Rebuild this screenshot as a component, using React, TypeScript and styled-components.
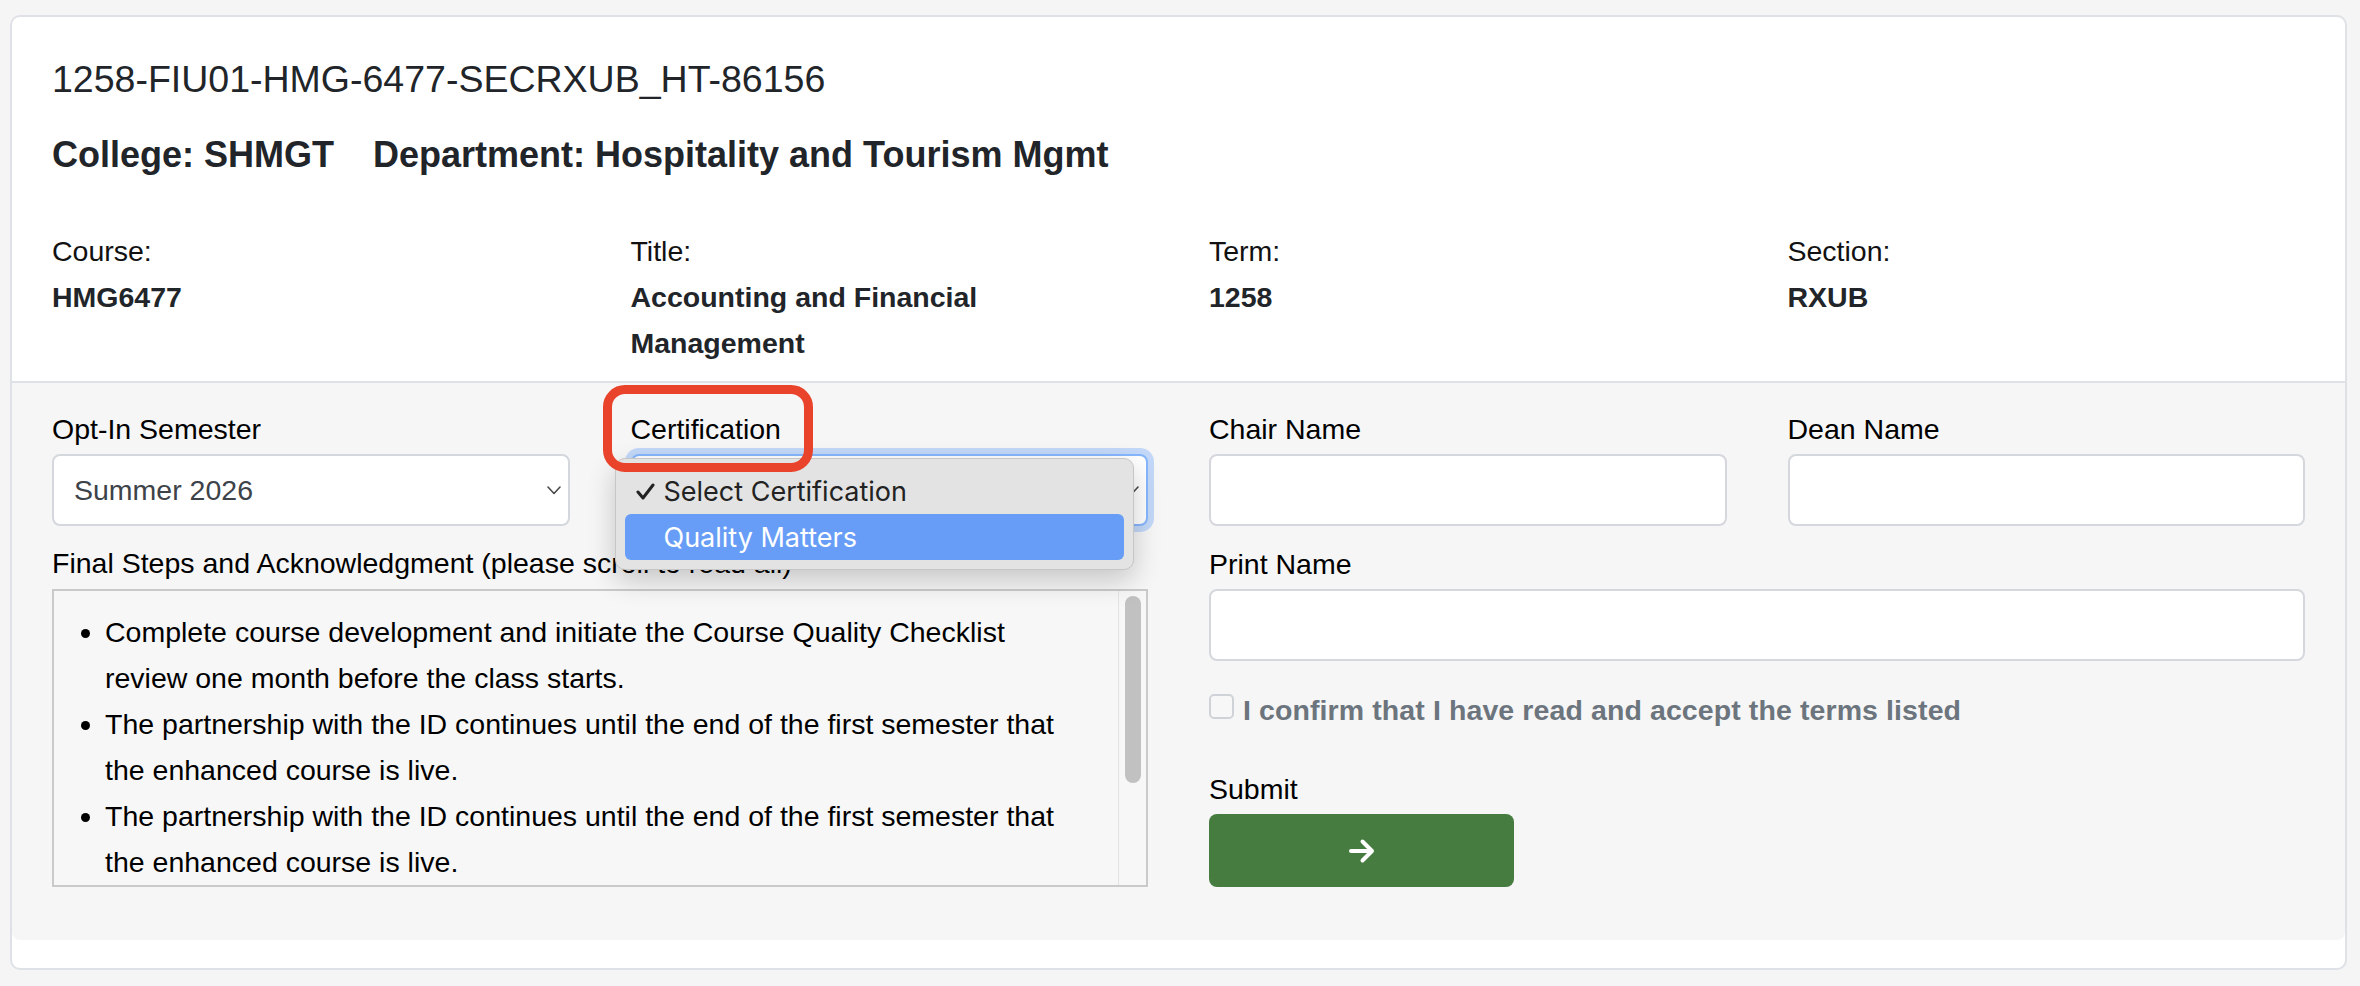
import React from "react";
import styled, { createGlobalStyle } from "styled-components";

const GlobalStyle = createGlobalStyle`
  html, body { margin: 0; padding: 0; background: #f5f5f5; }
  body { font-family: "Liberation Sans", Arial, Helvetica, sans-serif; color: #212529; }
  *, *::before, *::after { box-sizing: border-box; }
`;

const Page = styled.div`
  min-height: 986px;
  padding: 15px 13px 16px 10px;
  background: #f5f5f5;
`;

const Card = styled.div`
  background: #fff;
  border: 2px solid #dee2e6;
  border-radius: 10px;
  padding-bottom: 28px;
`;

const Header = styled.header`
  padding: 40px 40px 15px;
  border-bottom: 2px solid #dee2e6;
`;

const CaseId = styled.h1`
  margin: 0;
  font-size: 37.5px;
  font-weight: 400;
  line-height: 44px;
  color: #212529;
`;

const Org = styled.h2`
  margin: 31.5px 0 0;
  display: flex;
  gap: 39px;
  font-size: 36px;
  font-weight: 700;
  line-height: 44px;
  color: #212529;
`;

const InfoGrid = styled.dl`
  margin: 51.5px 0 0;
  display: grid;
  grid-template-columns: repeat(4, 1fr);
  column-gap: 61px;
  font-size: 28.5px;
  line-height: 46px;
`;

const InfoItem = styled.div``;

const InfoLabel = styled.dt`
  font-weight: 400;
  color: #111;
`;

const InfoValue = styled.dd`
  margin: 0;
  font-weight: 700;
  color: #212529;
`;

const FormArea = styled.form`
  background: #f6f6f6;
  border-radius: 0 0 8px 8px;
  padding: 23px 40px 53px;
  display: grid;
  grid-template-columns: 1fr 1fr;
  column-gap: 61px;
  align-items: start;
`;

const Half = styled.div`
  display: flex;
  flex-direction: column;
`;

const Pair = styled.div`
  display: grid;
  grid-template-columns: 1fr 1fr;
  column-gap: 61px;
`;

const Field = styled.div<{ $mt?: number }>`
  position: relative;
  display: flex;
  flex-direction: column;
  margin-top: ${(p) => p.$mt ?? 0}px;
`;

const Label = styled.label<{ $gap?: number }>`
  font-size: 28.5px;
  line-height: 46px;
  color: #000;
  margin-bottom: ${(p) => p.$gap ?? 2}px;
`;

const SelectBox = styled.div<{ $focused?: boolean }>`
  height: 72px;
  display: flex;
  align-items: center;
  justify-content: space-between;
  padding: 0 7px 0 20px;
  background: #fff;
  border: 2px solid ${(p) => (p.$focused ? "#86b7fe" : "#d4d8dd")};
  border-radius: 8px;
  box-shadow: ${(p) => (p.$focused ? "0 0 0 6px rgba(13, 110, 253, 0.22)" : "none")};
  font-size: 28.5px;
  color: #3d4349;
`;

const TextInput = styled.input`
  height: 72px;
  width: 100%;
  border: 2px solid #d4d8dd;
  border-radius: 8px;
  background: #fff;
  padding: 0 20px;
  font-family: inherit;
  font-size: 28.5px;
  outline: none;
`;

const ScrollBox = styled.div`
  height: 298px;
  display: flex;
  border: 2px solid #cacaca;
  background: #f7f7f7;
`;

const TermsList = styled.ul`
  flex: 1;
  margin: 0;
  overflow: hidden;
  padding: 18px 33px 0 51px;
  font-size: 28.5px;
  line-height: 46px;
  color: #000;
`;

const ScrollTrack = styled.div`
  width: 28px;
  flex: none;
  border-left: 1px solid #e3e3e3;
  padding: 5px 5px 0 6px;
`;

const ScrollThumb = styled.div`
  height: 187px;
  border-radius: 8px;
  background: #c1c1c1;
`;

const CheckRow = styled.label`
  display: flex;
  align-items: flex-start;
  gap: 9px;
  margin-top: 26px;
  font-size: 28.5px;
  line-height: 46px;
  font-weight: 700;
  letter-spacing: 0.1px;
  color: #6c757d;
`;

const CheckBox = styled.input.attrs({ type: "checkbox" })`
  appearance: none;
  margin: 7px 0 0;
  width: 25px;
  height: 25px;
  flex: none;
  border: 2px solid #cfd3d7;
  border-radius: 5px;
  background: #f7f7f7;
`;

const SubmitButton = styled.button`
  width: 305px;
  height: 73px;
  border: 0;
  border-radius: 8px;
  background: #477c40;
  display: flex;
  align-items: center;
  justify-content: center;
  color: #fff;
  cursor: pointer;
`;

const Menu = styled.div`
  position: absolute;
  left: -16px;
  top: 52px;
  width: 519px;
  padding: 9px;
  background: #e3e3e3;
  border: 1px solid #c6c6c6;
  border-radius: 10px;
  box-shadow: 0 10px 28px rgba(0, 0, 0, 0.2);
  font-family: Inter, "Liberation Sans", sans-serif;
  font-size: 27px;
  z-index: 2;
`;

const MenuItem = styled.div<{ $active?: boolean }>`
  display: flex;
  align-items: center;
  height: 46px;
  padding-left: 11px;
  border-radius: 6px;
  background: ${(p) => (p.$active ? "#679df6" : "transparent")};
  color: ${(p) => (p.$active ? "#fff" : "#222")};
`;

const CheckSlot = styled.span`
  width: 28px;
  flex: none;
  display: flex;
  align-items: center;
`;

const Annotation = styled.div`
  position: absolute;
  left: -28px;
  top: -21px;
  width: 210px;
  height: 87px;
  border: 9px solid #e9432b;
  border-radius: 22px;
  z-index: 3;
  pointer-events: none;
`;

const Chevron = () => (
  <svg width="14" height="9" viewBox="0 0 14 9" fill="none">
    <polyline points="1,1 7,7.5 13,1" stroke="#4a4a4a" strokeWidth="1.6" strokeLinecap="round" strokeLinejoin="round" />
  </svg>
);

const Tick = () => (
  <svg width="19" height="17" viewBox="0 0 19 17" fill="none">
    <polyline points="2,9 7,15 17,2" stroke="#222" strokeWidth="3" strokeLinecap="round" strokeLinejoin="round" />
  </svg>
);

const ArrowRight = () => (
  <svg width="28" height="26" viewBox="0 0 28 26" fill="none">
    <path d="M3 13 H24 M14.5 3.5 L24 13 L14.5 22.5" stroke="#fff" strokeWidth="4" strokeLinecap="round" strokeLinejoin="round" />
  </svg>
);

export default function App() {
  return (
    <>
      <GlobalStyle />
      <Page>
        <Card>
          <Header>
            <CaseId>1258-FIU01-HMG-6477-SECRXUB_HT-86156</CaseId>
            <Org>
              <span>College: SHMGT</span>
              <span>Department: Hospitality and Tourism Mgmt</span>
            </Org>
            <InfoGrid>
              <InfoItem>
                <InfoLabel>Course:</InfoLabel>
                <InfoValue>HMG6477</InfoValue>
              </InfoItem>
              <InfoItem>
                <InfoLabel>Title:</InfoLabel>
                <InfoValue>Accounting and Financial Management</InfoValue>
              </InfoItem>
              <InfoItem>
                <InfoLabel>Term:</InfoLabel>
                <InfoValue>1258</InfoValue>
              </InfoItem>
              <InfoItem>
                <InfoLabel>Section:</InfoLabel>
                <InfoValue>RXUB</InfoValue>
              </InfoItem>
            </InfoGrid>
          </Header>

          <FormArea onSubmit={(e) => e.preventDefault()}>
            <Half>
              <Pair>
                <Field>
                  <Label>Opt-In Semester</Label>
                  <SelectBox>
                    <span>Summer 2026</span>
                    <Chevron />
                  </SelectBox>
                </Field>
                <Field>
                  <Label>Certification</Label>
                  <SelectBox $focused>
                    <span>Select Certification</span>
                    <Chevron />
                  </SelectBox>
                  <Menu>
                    <MenuItem>
                      <CheckSlot>
                        <Tick />
                      </CheckSlot>
                      Select Certification
                    </MenuItem>
                    <MenuItem $active>
                      <CheckSlot />
                      Quality Matters
                    </MenuItem>
                  </Menu>
                  <Annotation />
                </Field>
              </Pair>
              <Field $mt={14}>
                <Label $gap={3}>Final Steps and Acknowledgment (please scroll to read all)</Label>
                <ScrollBox>
                  <TermsList>
                    <li>Complete course development and initiate the Course Quality Checklist review one month before the class starts.</li>
                    <li>The partnership with the ID continues until the end of the first semester that the enhanced course is live.</li>
                    <li>The partnership with the ID continues until the end of the first semester that the enhanced course is live.</li>
                  </TermsList>
                  <ScrollTrack>
                    <ScrollThumb />
                  </ScrollTrack>
                </ScrollBox>
              </Field>
            </Half>

            <Half>
              <Pair>
                <Field>
                  <Label>Chair Name</Label>
                  <TextInput type="text" />
                </Field>
                <Field>
                  <Label>Dean Name</Label>
                  <TextInput type="text" />
                </Field>
              </Pair>
              <Field $mt={15}>
                <Label>Print Name</Label>
                <TextInput type="text" />
              </Field>
              <CheckRow>
                <CheckBox />
                <span>I confirm that I have read and accept the terms listed</span>
              </CheckRow>
              <Field $mt={33}>
                <Label>Submit</Label>
                <SubmitButton type="submit" aria-label="Submit">
                  <ArrowRight />
                </SubmitButton>
              </Field>
            </Half>
          </FormArea>
        </Card>
      </Page>
    </>
  );
}
